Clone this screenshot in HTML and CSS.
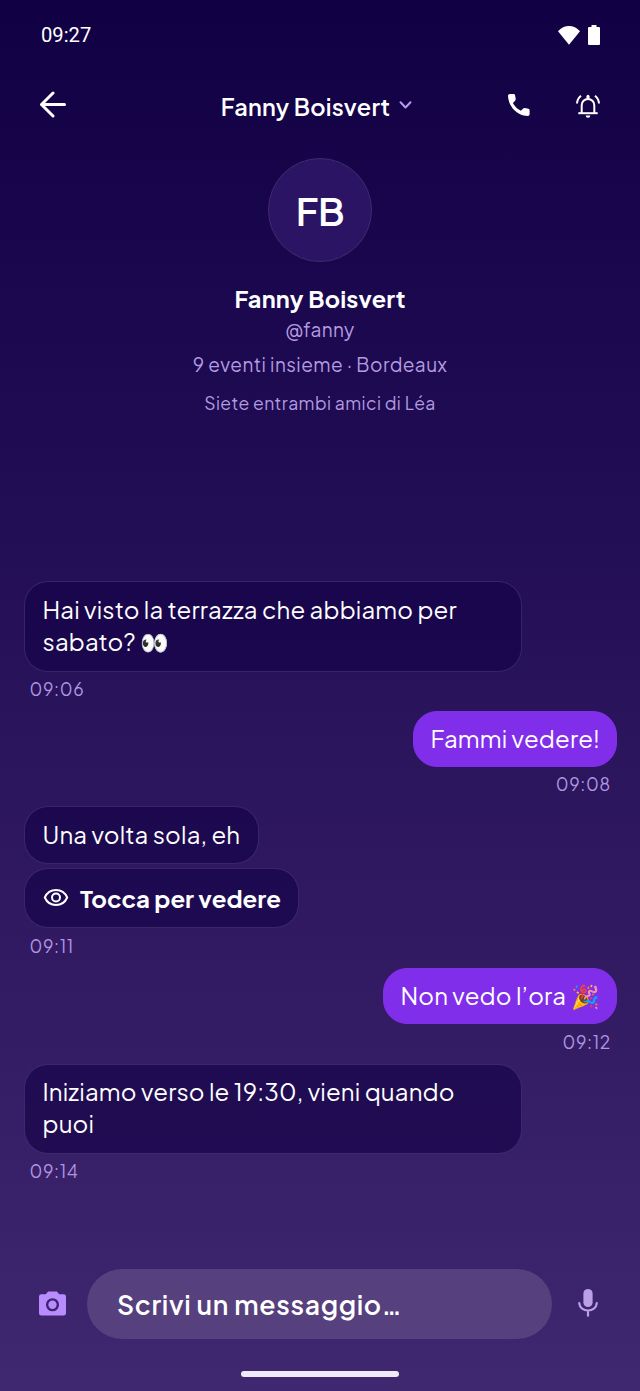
FILE: index.html
```html
<!DOCTYPE html>
<html lang="it">
<head>
<meta charset="utf-8">
<meta name="viewport" content="width=device-width, initial-scale=1">
<title>Fanny Boisvert</title>
<link rel="stylesheet" href="styles.css">
</head>
<body>
<div class="screen">
  <div class="status">
    <span class="clock">09:27</span>
    <div class="status-icons">
      <svg width="22" height="19" viewBox="0 0 22 19"><path fill="#fff" d="M0 5.200C6-1.700 16-1.700 22 5.200L11 18.800Z"/></svg>
      <svg width="12" height="20" viewBox="0 0 12 20"><path fill="#fff" d="M3.500 0h5v2H11q1 0 1 1v16q0 1-1 1H1q-1 0-1-1V3q0-1 1-1h2.500z"/></svg>
    </div>
  </div>
  <header class="nav">
    <svg class="back" width="28" height="28" viewBox="0 0 28 28" fill="none" stroke="#fff" stroke-width="3" stroke-linecap="round" stroke-linejoin="round"><path d="M14 2 2.500 13.500 14 25M2.500 13.500h23"/></svg>
    <div class="title"><span class="title-text">Fanny Boisvert</span>
      <svg width="14" height="10" viewBox="0 0 14 10" fill="none" stroke="#b69af0" stroke-width="2" stroke-linecap="round" stroke-linejoin="round"><path d="M1.500 2.200l5 5.300 5-5.300"/></svg>
    </div>
    <div class="actions">
      <svg width="24" height="24" viewBox="0 0 24 24"><path fill="#fff" d="M3 1h3.400c.9 0 1.500.5 1.700 1.400l.6 3.400c.1.800-.1 1.400-.6 1.900L5.900 9.900a18 18 0 0 0 8 7.800l2.300-2.200c.5-.5 1.100-.7 1.800-.5l3.300.7c.8.200 1.300.800 1.300 1.600v3.700c0 1.200-.8 2-2 1.900C10 22.700 1.500 13.500 1 3 1 1.800 1.800 1 3 1z"/></svg>
      <svg class="bell" width="26" height="26" viewBox="0 0 26 26" fill="none" stroke="#fff" stroke-width="2"><path d="M3.300 20.200h19.400"/><path d="M6.700 20v-7.800a6.300 6.300 0 0 1 12.600 0V20"/><path d="M13 3.200v2" stroke-width="3" stroke-linecap="round"/><path d="M10.700 22.400h4.600a2.300 2.300 0 0 1-4.600 0z" fill="#fff" stroke="none"/><path d="M6 2.800Q2.300 5.800 2 10.500M20 2.800q3.700 3 4 7.700"/></svg>
    </div>
  </header>
  <section class="profile">
    <div class="avatar"><span>FB</span></div>
    <div class="name"><span>Fanny Boisvert</span></div>
    <div class="handle"><span>@fanny</span></div>
    <div class="meta"><span>9 eventi insieme · Bordeaux</span></div>
    <div class="mutual"><span>Siete entrambi amici di Léa</span></div>
  </section>
  <main class="chat">
    <div class="msg in">
      <div class="bubble wide first">Hai visto la terrazza che abbiamo per<br>sabato? <span class="emoji">👀</span></div>
      <time>09:06</time>
    </div>
    <div class="msg out">
      <div class="bubble w-show">Fammi vedere!</div>
      <time>09:08</time>
    </div>
    <div class="msg in">
      <div class="bubble w-once">Una volta sola, eh</div>
      <div class="bubble reveal">
        <svg width="26" height="20" viewBox="0 0 26 20" fill="none" stroke="#fff" stroke-width="2"><path d="M1.800 9.500C4 4.500 8 2 13 2s9 2.500 11.200 7.500C22 14.500 18 17 13 17S4 14.500 1.800 9.500z" stroke-linejoin="round"/><circle cx="13" cy="9.500" r="4"/></svg>
        <span>Tocca per vedere</span>
      </div>
      <time>09:11</time>
    </div>
    <div class="msg out">
      <div class="bubble w-wait">Non vedo l’ora <span class="emoji">🎉</span></div>
      <time>09:12</time>
    </div>
    <div class="msg in">
      <div class="bubble wide">Iniziamo verso le 19:30, vieni quando<br>puoi</div>
      <time>09:14</time>
    </div>
  </main>
  <footer class="composer">
    <svg class="camera" width="27" height="25" viewBox="0 0 28 25"><path fill="#b88cff" fill-rule="evenodd" d="M9.500 0h9l2.500 3h4.500Q28 3 28 5.500v17q0 2.500-2.500 2.500h-23Q0 25 0 22.500v-17Q0 3 2.500 3H7zM14 7a6.800 6.800 0 1 0 0 13.600A6.800 6.800 0 0 0 14 7z"/><circle cx="14" cy="13.800" r="4.300" fill="#b88cff"/></svg>
    <div class="field"><span>Scrivi un messaggio…</span></div>
    <svg class="mic" width="22" height="30" viewBox="0 0 22 30" fill="none" stroke="#bba0e6" stroke-width="2.200" stroke-linecap="round"><rect x="6.400" y="1" width="9.200" height="18" rx="4.600" fill="#bba0e6" stroke="none"/><path d="M2.200 15C2.800 25 19.200 25 19.800 15M11 22.500V27.700"/></svg>
  </footer>
  <div class="home"></div>
</div>
</body>
</html>
```
FILE: styles.css
```css
* { box-sizing: border-box; }
body { margin: 0; }
.screen {
  width: 640px;
  height: 1391px;
  display: flex;
  flex-direction: column;
  overflow: hidden;
  color: #fff;
  font-family: "Plus Jakarta Sans", Inter, "Noto Color Emoji", sans-serif;
  background: linear-gradient(180deg, #120044 0%, #1d0a51 28%, #2a145c 52%, #351d65 76%, #402871 100%);
  white-space: nowrap;
}
svg { display: block; flex: none; }
.status {
  height: 70px;
  padding: 0 40px 0 41px;
  display: flex;
  align-items: center;
  justify-content: space-between;
}
.clock { font: 400 20.200px/24px Roboto, sans-serif; }
.status-icons { display: flex; gap: 8px; align-items: center; }
.nav {
  height: 70px;
  padding: 0 39px;
  display: grid;
  grid-template-columns: 100px 1fr 100px;
  align-items: center;
}
.title { display: flex; align-items: center; justify-content: center; gap: 9px; padding-right: 6px; }
.title-text { font-size: 23.500px; font-weight: 600; line-height: 32px; letter-spacing: 0.240px; padding-top: 3px; }
.actions { display: flex; align-items: center; justify-content: flex-end; gap: 44px; }
.bell { margin-top: 1px; }
.profile {
  height: 423px;
  padding-top: 18px;
  display: flex;
  flex-direction: column;
  align-items: center;
  color: #b49be0;
}
.avatar {
  width: 104px;
  height: 104px;
  border-radius: 50%;
  border: 1px solid #41296f;
  background: #2b1463;
  display: flex;
  align-items: center;
  justify-content: center;
  color: #fff;
  font-size: 38.500px;
  font-weight: 600;
  letter-spacing: -0.300px;
  padding-top: 1px;
}
.name { margin-top: 21px; font-size: 23.500px; line-height: 32px; letter-spacing: 0.220px; font-weight: 700; color: #fff; }
.handle { font-size: 19px; line-height: 28px; letter-spacing: 0.350px; }
.meta { font-size: 19px; line-height: 28px; letter-spacing: 0.450px; margin-top: 7px; }
.mutual { font-size: 17.500px; line-height: 28px; letter-spacing: 0.420px; margin-top: 11px; }
.chat {
  height: 706px;
  padding: 18px 23.500px 0;
  display: flex;
  flex-direction: column;
  gap: 10px;
}
.msg { display: flex; flex-direction: column; align-items: flex-start; }
.msg.out { align-items: flex-end; }
.bubble {
  height: 58px;
  padding: 10.500px 18px 0;
  border: 1px solid rgba(255, 255, 255, 0.12);
  border-radius: 24px;
  background: rgba(18, 0, 68, 0.6);
  font-size: 24px;
  line-height: 32px;
  letter-spacing: 0.160px;
}
.out .bubble { height: 55.500px; padding: 10px 17px 0; background: #812eeb; border-color: #812eeb; }
.bubble.wide { width: 498.500px; height: 90px; }
.bubble.first { height: 90.500px; }
.w-show { width: 204px; }
.w-once { width: 235px; }
.out .w-wait { width: 234px; height: 56.500px; }
.emoji { font-size: 23px; letter-spacing: 0; margin-left: 1px; }
.bubble.reveal {
  width: 275.500px;
  height: 60.500px;
  margin-top: 3.500px;
  padding-top: 0;
  display: flex;
  align-items: center;
  gap: 11.500px;
  font-weight: 700;
  letter-spacing: 0;
}
time { font-size: 17.500px; line-height: 24px; letter-spacing: 0.650px; margin: 5.500px 6px 0; color: #b195e2; }
.out time { margin-right: 5.500px; }
.composer {
  height: 70px;
  padding: 0 41px 0 39px;
  display: flex;
  align-items: center;
  gap: 21px;
}
.camera { margin-top: -2px; }
.mic { margin-top: -2px; }
.field {
  flex: 1;
  height: 70px;
  border-radius: 35px;
  margin-right: 4px;
  padding: 0 30px;
  background: #56407e;
  display: flex;
  align-items: center;
  font-size: 26.500px;
  font-weight: 600;
  letter-spacing: 0.660px;
}
.home { width: 158px; height: 6px; margin: 32px auto 0; border-radius: 3px; background: #f0eaf6; }
```
